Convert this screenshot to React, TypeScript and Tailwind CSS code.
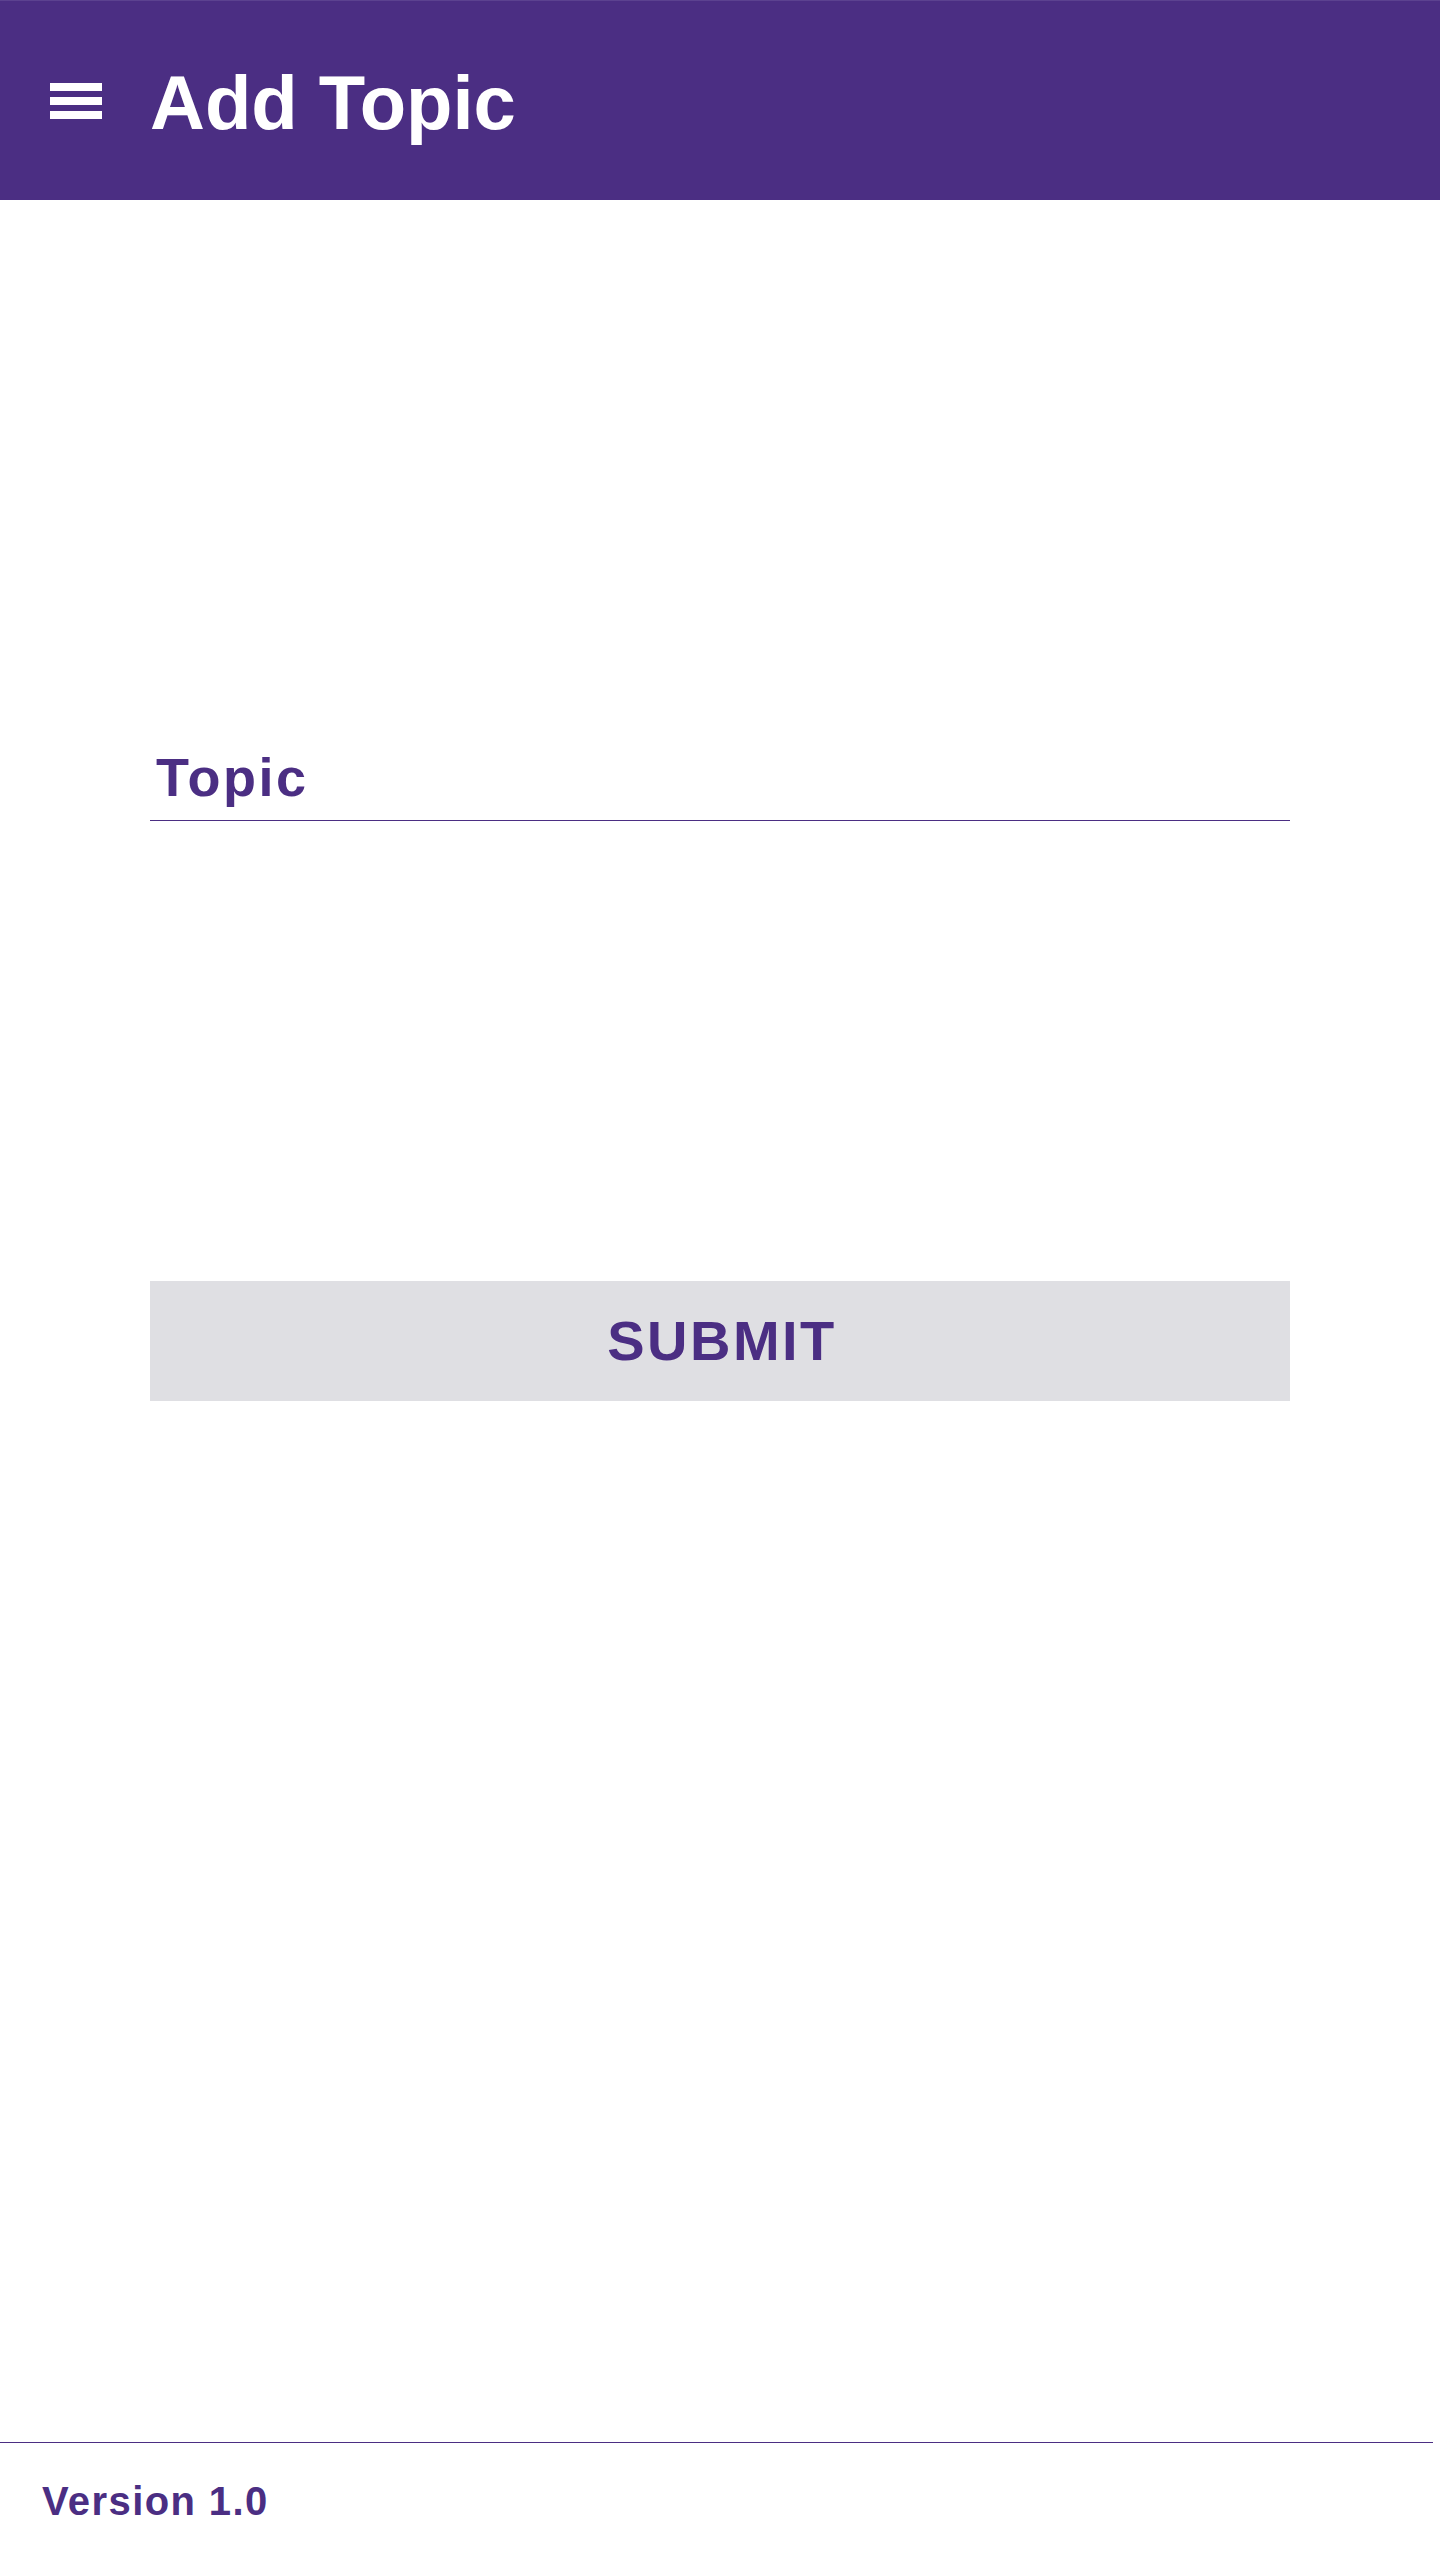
export default function App() {
  return (
    <div className="min-h-screen flex flex-col bg-white font-['Liberation_Sans',Arial,sans-serif]">
      {/* App bar */}
      <header className="h-[200px] bg-[#4b2e83] border-t border-[#5c4290] flex items-center">
        <button className="ml-[50px] w-[52px] h-[36px] flex flex-col justify-between" aria-label="menu">
          <span className="block h-[8px] w-full bg-white"></span>
          <span className="block h-[8px] w-full bg-white"></span>
          <span className="block h-[8px] w-full bg-white"></span>
        </button>
        <h1 className="ml-[48px] mt-[4px] text-white font-bold text-[76px] leading-none">Add Topic</h1>
      </header>

      {/* Form */}
      <main className="flex-1 px-[150px]">
        <div className="mt-[550px] border-b border-[#4b2e83] pb-[16px] pl-[6px]">
          <label className="block text-[#4b2e83] font-bold text-[54px] leading-none tracking-[2.5px]">Topic</label>
        </div>
        <button className="mt-[460px] w-full h-[120px] bg-[#dfdfe3] flex items-center justify-center">
          <span className="text-[#4b2e83] font-bold text-[56px] leading-none tracking-[2.5px] pl-[4px]">SUBMIT</span>
        </button>
      </main>

      {/* Footer */}
      <footer className="h-[118px] mr-[7px] border-t border-[#4b2e83] pt-[38px] pl-[42px]">
        <span className="text-[#4b2e83] font-bold text-[40px] leading-none tracking-[1.4px]">Version 1.0</span>
      </footer>
    </div>
  )
}
